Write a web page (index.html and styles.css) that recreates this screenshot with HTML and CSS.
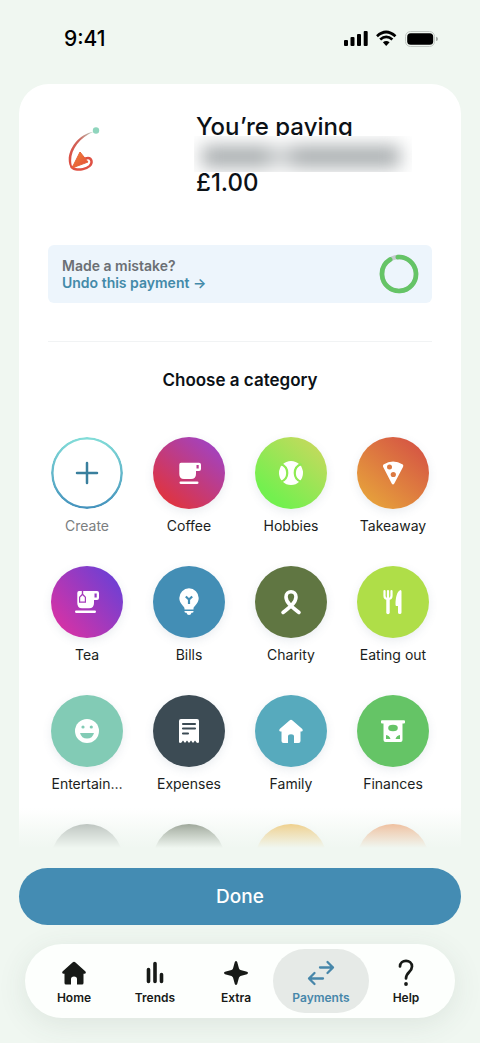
FILE: index.html
```html
<!DOCTYPE html>
<html lang="en">
<head>
<meta charset="utf-8">
<meta name="viewport" content="width=device-width, initial-scale=1">
<title>Choose a category</title>
<link rel="stylesheet" href="styles.css">
</head>
<body>
<header class="status">
  <span class="time">9:41</span>
  <svg class="status-icons" viewBox="0 0 95 18" width="95" height="18" aria-hidden="true">
    <rect x="0" y="10" width="4" height="6" rx="1"/><rect x="6.5" y="7" width="4" height="9" rx="1"/><rect x="13" y="4" width="4" height="12" rx="1"/><rect x="19.7" y="1" width="4" height="15" rx="1"/>
    <g fill="none" stroke="#000" stroke-width="2.7"><path d="M33 6.2Q42 -2.2 51.500 6.200"/><path d="M36.200 9.600Q42.200 4.200 48.400 9.600"/></g>
    <path d="M38.900 12.300Q42.200 9.600 45.600 12.300L42.200 16Z"/>
    <rect x="61.500" y="1.500" width="29" height="15" rx="5" fill="none" stroke="#c3c9c4"/><rect x="63.200" y="3.200" width="26" height="11.600" rx="3.500"/><path d="M92 6.800Q94 7.200 94 9T92 11Z" fill="#a5aaa6"/>
  </svg>
</header>

<main class="sheet">
  <section class="payee">
    <div class="avatar">
      <svg viewBox="0 0 36 48" width="36" height="48" aria-hidden="true">
        <defs><linearGradient id="trail" x1="0" y1="1" x2="1" y2="0"><stop offset="0" stop-color="#df493d"/><stop offset=".6" stop-color="#cf665c"/><stop offset="1" stop-color="#b7d8ce"/></linearGradient>
        <linearGradient id="cone" x1="0" y1="0" x2="1" y2="1"><stop offset="0" stop-color="#ef8a35"/><stop offset="1" stop-color="#e4483c"/></linearGradient></defs>
        <path d="M28 5.500C9 9 -1 29 4 40L7 43C1 30 10 13 28 5.500Z" fill="url(#trail)"/>
        <path d="M5 40C8 47 27 43 25.500 35C24.500 30.500 20 31.500 17 34" fill="none" stroke="#df5144" stroke-width="2.500"/>
        <path d="M14 26L22 36L6 42Z" fill="url(#cone)" stroke="#e86238" stroke-linejoin="round"/>
        <circle cx="30" cy="4.500" r="3.200" fill="#8fd5bd"/>
      </svg>
    </div>
    <div class="payee-text">
      <p>You’re paying</p>
      <p class="payee-name"><span class="redacted" aria-label="Hidden name"></span></p>
      <p>£1.00</p>
    </div>
  </section>

  <section class="notice">
    <div><p>Made a mistake?</p><a href="#undo">Undo this payment →</a></div>
    <svg viewBox="0 0 40 40" width="40" height="40" aria-hidden="true"><circle cx="20" cy="20" r="17" fill="none" stroke="#c5cbce" stroke-width="4.500"/><circle cx="20" cy="20" r="17" fill="none" stroke="#65c466" stroke-width="4.700" stroke-linecap="round" stroke-dasharray="98 10" transform="rotate(-94 20 20)"/></svg>
  </section>

  <h1>Choose a category</h1>

  <div class="grid">
    <button class="cat create"><svg viewBox="-36 -36 72 72" aria-hidden="true"><defs><linearGradient id="ring" x1="0" y1="0" x2="0" y2="1"><stop offset="0" stop-color="#82dcd8"/><stop offset="1" stop-color="#4593bd"/></linearGradient></defs><circle r="34.700" fill="#fff" stroke="url(#ring)" stroke-width="2.500"/><path d="M-10 0H10M0 -10V10" stroke="#397f9d" stroke-width="2.500" stroke-linecap="round"/></svg><span>Create</span></button>

    <button class="cat"><svg class="coffee" viewBox="-36 -36 72 72" aria-hidden="true"><g fill="#fff"><path d="M-8 -10.300H10Q12 -10.300 12 -8.300V-4Q12 -2 10 -2H7V1Q7 6 2 6H-5Q-9.700 6 -9.700 1V-8.300Q-9.700 -10.300 -8 -10.300ZM7.500 -8V-4.500H9.700V-8Z" fill-rule="evenodd"/><rect x="-9.500" y="8.600" width="19" height="2.300" rx="1.100"/></g></svg><span>Coffee</span></button>

    <button class="cat"><svg class="hobbies" viewBox="-36 -36 72 72" aria-hidden="true"><circle r="12" fill="#fff"/><g fill="none" stroke="#8eeb52" stroke-width="2.200"><path d="M-10.500 -9C-1.500 -6 -1.500 6 -10.500 9M10.500 -9C1.500 -6 1.500 6 10.500 9"/></g></svg><span>Hobbies</span></button>

    <button class="cat"><svg class="takeaway" viewBox="-36 -36 72 72" aria-hidden="true"><path d="M-9.500 -8.500Q0 -14.500 9.800 -8.500Q10.800 -7.500 10 -6L1.300 10.500Q0 12.500 -1.300 10.500L-9.800 -6Q-10.500 -7.500 -9.500 -8.500Z" fill="#fff"/><circle cx="-3.500" cy="-6" r="2.500" fill="#dc7a42"/><circle cx=".3" cy="1.500" r="2.600" fill="#dc7a42"/></svg><span>Takeaway</span></button>

    <button class="cat"><svg class="tea" viewBox="-36 -36 72 72" aria-hidden="true"><g fill="#fff"><path d="M-8 -11H10Q12 -11 12 -9V-4Q12 -2 10 -2H7V1Q7 6.300 2 6.300H-5Q-9.700 6.300 -9.700 1V-9Q-9.700 -11 -8 -11ZM7.500 -8.500V-4.500H9.700V-8.500Z" fill-rule="evenodd"/><rect x="-12" y="8.600" width="21" height="2.300" rx="1.100"/></g><path d="M-5.200 -11.500H-3.800V-8L-1 -5V.8H-8V-5L-5.200 -8Z" fill="#a63bbb"/><path d="M-4.500 -6.800L-2.200 -4.500V-.4H-6.800V-4.500Z" fill="#fff"/></svg><span>Tea</span></button>

    <button class="cat"><svg class="bills" viewBox="-36 -36 72 72" aria-hidden="true"><g fill="#fff"><path d="M-4.500 7.500V6.500C-4.500 4 -9.700 2 -9.700 -4A9.700 9.700 0 0 1 9.700 -4C9.700 2 4.500 4 4.500 6.500V7.500Z"/><path d="M-4.500 9H4.500V9.500Q4.500 10.800 3 10.800H2.500Q2 13 0 13T-2.500 10.800H-3Q-4.500 10.800 -4.500 9.500Z"/></g><path d="M-3.200 -5.500L0 -2.500L3.200 -5.500M0 -2.500V2" fill="none" stroke="#438eb5" stroke-width="2.200"/></svg><span>Bills</span></button>

    <button class="cat"><svg class="charity" viewBox="-36 -36 72 72" aria-hidden="true"><path d="M-8 10.500C-2 6 5 1 5 -5C5 -12 -5 -12 -5 -5C-5 1 2 6 8 10.500" fill="none" stroke="#fff" stroke-width="3.600" stroke-linecap="round"/></svg><span>Charity</span></button>

    <button class="cat"><svg class="eating" viewBox="-36 -36 72 72" aria-hidden="true"><path d="M-8.500 -11V-6Q-8.500 -3 -5 -3T-1.500 -6V-11M-5 -11V10.500" fill="none" stroke="#fff" stroke-width="2.200" stroke-linecap="round"/><path d="M-5 -2V10.500" stroke="#fff" stroke-width="3.400" stroke-linecap="round"/><path d="M8.500 -10.500V10.500Q8.500 12 6.800 12T5 10.500V4H3.500Q2.500 4 2.500 2.500C2.500 -4 4 -11 7.500 -12Q8.500 -12 8.500 -10.500Z" fill="#fff"/></svg><span>Eating out</span></button>

    <button class="cat"><svg class="entertainment" viewBox="-36 -36 72 72" aria-hidden="true"><circle r="12" fill="#fff"/><g fill="#82cbb5"><circle cx="-4" cy="-4" r="1.600"/><circle cx="4.300" cy="-4" r="1.600"/><path d="M-7 2H7Q5.500 7.500 0 7.500T-7 2Z"/></g></svg><span>Entertain…</span></button>

    <button class="cat"><svg class="expenses" viewBox="-36 -36 72 72" aria-hidden="true"><path d="M-8 -12H8Q10 -12 10 -10V11.500L8 12L6 9.500L4 12L2 9.500L0 12L-2 9.500L-4 12L-6 9.500L-8 12L-10 11.500V-10Q-10 -12 -8 -12Z" fill="#fff"/><path d="M-6 -7H6M-6 -2.500H6M-6 2.500H-1" stroke="#3c4b54" stroke-width="2.100" stroke-linecap="round"/></svg><span>Expenses</span></button>

    <button class="cat"><svg class="family" viewBox="-36 -36 72 72" aria-hidden="true"><path d="M-1.500 -10.500Q0 -11.800 1.500 -10.500L11.300 -2Q12.500 0 10.500 .5H9.500V10Q9.500 12 7.500 12H3V5.500Q3 3.300 0 3.300T-3 5.500V12H-7.500Q-9.500 12 -9.500 10V.5H-10.500Q-12.500 0 -11.300 -2Z" fill="#fff"/></svg><span>Family</span></button>

    <button class="cat"><svg class="finances" viewBox="-36 -36 72 72" aria-hidden="true"><path d="M-11 -10.700H11Q12 -10.700 12 -9.500V-8.500Q12 -7.500 11 -7.500H9.500V9Q9.500 11 7.500 11H-7.500Q-9.500 11 -9.500 9V-7.500H-11Q-12 -7.500 -12 -8.500V-9.500Q-12 -10.700 -11 -10.700Z" fill="#fff"/><g fill="#65c466"><ellipse cx="0" cy="-3" rx="4.800" ry="3.200"/><path d="M-7 4Q-3.500 4.500 -2.500 8H-7ZM7 4Q3.500 4.500 2.500 8H7Z"/></g></svg><span>Finances</span></button>

    <button class="cat" aria-label="More category 1"><svg class="more-a" viewBox="-36 -36 72 72" aria-hidden="true"></svg></button>
    <button class="cat" aria-label="More category 2"><svg class="more-b" viewBox="-36 -36 72 72" aria-hidden="true"></svg></button>
    <button class="cat" aria-label="More category 3"><svg class="more-c" viewBox="-36 -36 72 72" aria-hidden="true"></svg></button>
    <button class="cat" aria-label="More category 4"><svg class="more-d" viewBox="-36 -36 72 72" aria-hidden="true"></svg></button>
  </div>
  <div class="fade"></div>
</main>

<button class="done">Done</button>

<nav class="tabs">
  <a href="#home"><svg viewBox="-14 -14 28 28" aria-hidden="true"><path d="M-1.500 -10.500Q0 -11.800 1.500 -10.500L11.500 -1.500Q12.500 .5 10.500 .7H9.500V10Q9.500 11.500 8 11.500H3V6Q3 3.500 0 3.500T-3 6V11.500H-8Q-9.500 11.500 -9.500 10V.7H-10.500Q-12.500 .5 -11.500 -1.500Z" fill="#171a17"/></svg>Home</a>
  <a href="#trends"><svg viewBox="-14 -14 28 28" aria-hidden="true"><path d="M-6.500 -3.500V8.500M0 -9.500V8.500M6.500 1.500V8.500" stroke="#171a17" stroke-width="3.600" stroke-linecap="round"/></svg>Trends</a>
  <a href="#extra"><svg viewBox="-14 -14 28 28" aria-hidden="true"><path d="M-1.200 -11Q0 -13 1.200 -11L3 -4.500Q3.500 -3.500 4.500 -3L11 -1.200Q13 0 11 1.200L4.500 3Q3.500 3.500 3 4.500L1.200 11Q0 13 -1.200 11L-3 4.500Q-3.500 3.500 -4.500 3L-11 1.200Q-13 0 -11 -1.200L-4.500 -3Q-3.500 -3.500 -3 -4.500Z" fill="#171a17"/></svg>Extra</a>
  <a href="#payments" class="active" aria-current="page"><svg viewBox="-14 -14 28 28" aria-hidden="true"><path d="M-1 -5.500H12M6.500 -11L12 -5.500L6.500 0M2 5.500H-12M-6.500 0L-12 5.500L-6.500 11" fill="none" stroke="#4787aa" stroke-width="2.300" stroke-linecap="round" stroke-linejoin="round"/></svg>Payments</a>
  <a href="#help"><svg viewBox="-14 -14 28 28" aria-hidden="true"><path d="M-6 -6.500C-6 -14 6 -14 6 -6.500C6 -1 0 -1 0 5.500" fill="none" stroke="#171a17" stroke-width="2.700" stroke-linecap="round"/><circle cy="11" r="1.900" fill="#171a17"/></svg>Help</a>
</nav>
</body>
</html>
```
FILE: styles.css
```css
* { box-sizing: border-box; }
body {
  margin: 0;
  height: 100vh;
  display: flex;
  flex-direction: column;
  padding-bottom: 25px;
  overflow: hidden;
  background: #f0f7f1;
  color: #0c1116;
  font-family: Inter, "Liberation Sans", sans-serif;
}
p, h1 { margin: 0; }
button { font: inherit; border: 0; cursor: pointer; }
a { text-decoration: none; color: inherit; }

.status {
  display: flex;
  justify-content: space-between;
  align-items: center;
  padding: 24px 41px 30px 64px;
  color: #000;
}
.time { font-size: 21px; line-height: 30px; font-weight: 500; }

.sheet {
  position: relative;
  flex: 1;
  min-height: 0;
  overflow: hidden;
  margin: 0 19px;
  padding: 29px 17px 0;
  border-radius: 30px 30px 0 0;
  background: #fff;
}
.payee { display: flex; padding: 0 12px; }
.avatar { width: 148px; padding: 13px 0 0 18px; }
.payee-text { flex: 1; font-size: 24px; line-height: 28px; font-weight: 500; }
.payee-name { position: relative; height: 28px; }
.redacted {
  position: absolute;
  top: -5px;
  left: -2px;
  width: 218px;
  height: 36px;
  overflow: hidden;
  background: #fff;
}
.redacted::before {
  content: "";
  position: absolute;
  inset: 10px 12px 5px 8px;
  background: linear-gradient(90deg, #a5aaac 0 32%, #cfd2d3 36% 42%, #a5aaac 48% 100%);
  filter: blur(9px);
}

.notice {
  display: flex;
  justify-content: space-between;
  align-items: center;
  margin: 48px 12px 0;
  padding: 9px 13px 9px 14px;
  border-radius: 6px;
  background: #edf5fc;
  color: #6b6f74;
  font-size: 14px;
  line-height: 17px;
  font-weight: 600;
}
.notice a { display: block; color: #438aa9; }
.notice svg { display: block; }

.sheet h1 {
  margin: 38px 12px 0;
  padding: 27px 0 46px;
  border-top: 1px solid #f1f3f4;
  text-align: center;
  font-size: 17px;
  line-height: 22px;
  font-weight: 600;
}

.grid {
  display: grid;
  grid-template-columns: repeat(4, 1fr);
  row-gap: 30px;
}
.cat {
  display: flex;
  flex-direction: column;
  align-items: center;
  gap: 7px;
  padding: 0;
  background: none;
  color: #1b1e21;
  font-size: 14px;
  line-height: 20px;
}
.cat svg {
  width: 72px;
  height: 72px;
  border-radius: 50%;
  box-shadow: 0 3px 10px rgba(80, 110, 130, 0.12);
}
.create { color: #7b7e80; }
.create svg { box-shadow: none; }
.coffee { background: linear-gradient(40deg, #de3442 15%, #a043c4 90%); }
.hobbies { background: linear-gradient(40deg, #73f04f 20%, #c5d95d 90%); }
.takeaway { background: linear-gradient(40deg, #e7a33b 10%, #d55444 90%); }
.tea { background: linear-gradient(50deg, #d932a4 10%, #6b40d5 90%); }
.bills { background: #438eb5; }
.charity { background: #607642; }
.eating { background: #afde48; }
.entertainment { background: #82cbb5; }
.expenses { background: #3c4b54; }
.family { background: #57aabd; }
.finances { background: #65c466; }
.more-a { background: #969d9a; }
.more-b { background: #5f6957; }
.more-c { background: #eeb13f; }
.more-d { background: #ee955f; }
.fade {
  position: absolute;
  inset: auto 0 0;
  height: 40px;
  background: linear-gradient(rgba(240, 247, 241, 0), rgba(240, 247, 241, 0.6) 55%, #f0f7f1);
}

.done {
  margin: 20px 19px 19px;
  padding: 15px;
  border-radius: 29px;
  background: #448cb3;
  color: #fff;
  font-size: 19px;
  line-height: 27px;
  font-weight: 500;
}

.tabs {
  display: flex;
  gap: 7px;
  margin: 0 25px;
  padding: 5px 12px;
  border-radius: 37px;
  background: #fdfffd;
  box-shadow: 0 6px 30px rgba(60, 75, 65, 0.1);
  color: #171a17;
  font-size: 12px;
  line-height: 16px;
  font-weight: 600;
}
.tabs a {
  flex: 1;
  display: flex;
  flex-direction: column;
  align-items: center;
  gap: 3px;
  padding: 10px 0 7px;
  border-radius: 32px;
}
.tabs svg { width: 28px; height: 28px; }
.tabs .active {
  flex: 0 0 96px;
  margin: 0 -7px;
  background: #e6eae7;
  color: #4787aa;
}
```
